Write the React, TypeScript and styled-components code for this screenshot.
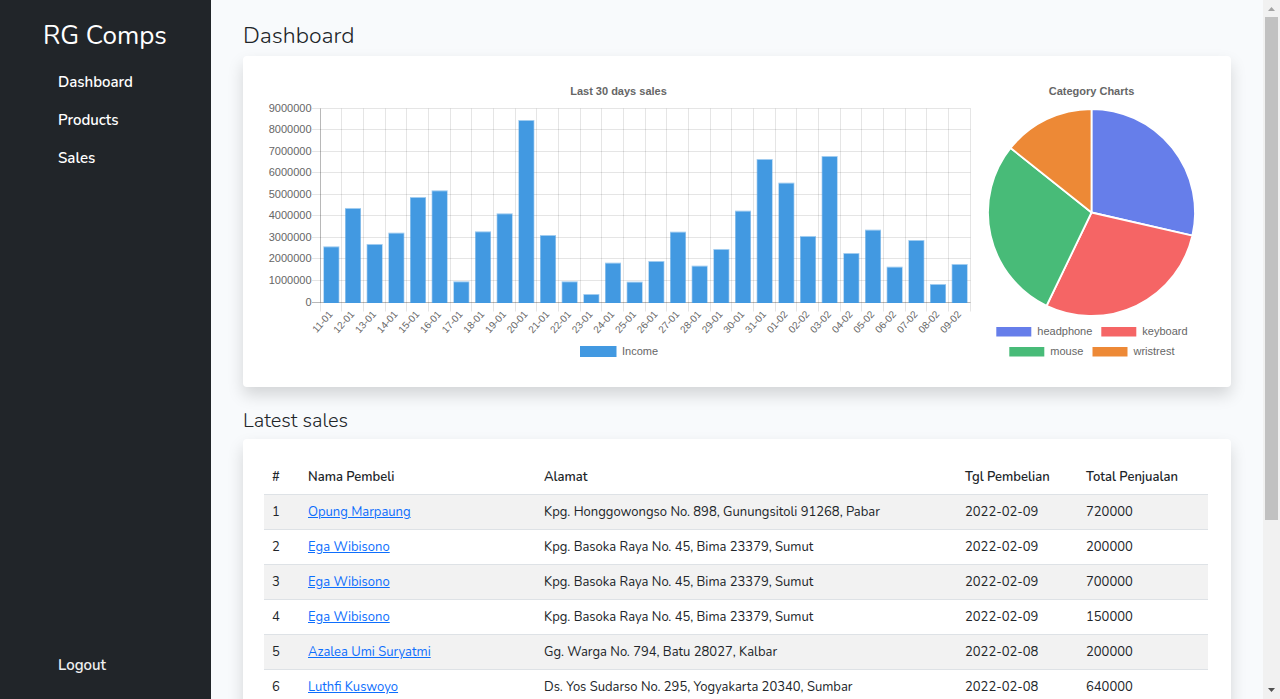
import React from "react";
import styled, { createGlobalStyle } from "styled-components";

const GlobalStyle = createGlobalStyle`
  *, *::before, *::after { box-sizing: border-box; }
  body {
    margin: 0;
    font-family: Nunito, Lato, sans-serif;
    font-size: 13px;
    font-weight: 400;
    color: #212529;
    background: #f8fafc;
  }
`;

const Shell = styled.div`
  display: grid;
  grid-template-columns: 211px minmax(0, 1fr) 17px;
  height: 100vh;
`;

const Sidebar = styled.nav`
  display: flex;
  flex-direction: column;
  padding: 17px 28px 16px;
  background: #212529;
`;

const Brand = styled.a`
  padding: 0 15px;
  font-size: 26px;
  font-weight: 400;
  line-height: 37px;
  white-space: nowrap;
  color: #fff;
  text-decoration: none;
`;

const NavList = styled.ul`
  display: flex;
  flex-direction: column;
  flex: 1;
  margin: 8px 0 0;
  padding: 0;
  list-style: none;
`;

const NavItem = styled.li<{ $last?: boolean }>`
  margin-top: ${(p) => (p.$last ? "auto" : "0")};
`;

const navEntry = `
  display: block;
  padding: 8px 0 6px 30px;
  border: 0;
  background: none;
  font-family: inherit;
  font-size: 15px;
  font-weight: 600;
  line-height: 24px;
  color: #fff;
  text-decoration: none;
`;

const NavLink = styled.a`${navEntry}`;

const LogoutButton = styled.button`
  ${navEntry}
  color: #f0f0f0;
  cursor: pointer;
`;

const Main = styled.main`
  padding: 21px 32px 32px;
  overflow-y: auto;
  scrollbar-width: none;
`;

const PageTitle = styled.h1`
  margin: 0 0 5px;
  font-size: 23px;
  font-weight: 300;
  line-height: 30px;
`;

const SectionTitle = styled.h2`
  margin: 21px 0 5px;
  font-size: 20px;
  font-weight: 300;
  line-height: 26px;
`;

const Card = styled.section`
  padding: 21px 23px 21px 21px;
  border-radius: 4px;
  background: #fff;
  box-shadow: 0 8px 16px rgba(0, 0, 0, 0.15);
`;

const Charts = styled.div`
  display: flex;
  align-items: flex-start;
  gap: 7px;
`;

const ChartSvg = styled.svg<{ $grow: number }>`
  display: block;
  flex: ${(p) => p.$grow} 1 0;
  min-width: 0;
  font-family: "Liberation Sans", Arial, sans-serif;
  font-size: 11px;
  font-weight: 400;
  fill: #666;
`;

const ChartTitle = styled.text`
  font-weight: 700;
  text-anchor: middle;
`;

const DayLabel = styled.text`
  font-size: 10px;
  text-anchor: end;
`;

const Table = styled.table`
  width: 100%;
  table-layout: fixed;
  border-collapse: collapse;
`;

const Col = styled.col<{ $width?: string }>`
  width: ${(p) => p.$width ?? "auto"};
`;

const HeadCell = styled.th`
  padding: 8px;
  border-bottom: 1px solid #dee2e6;
  font-weight: 600;
  line-height: 18px;
  text-align: left;
`;

const Row = styled.tr`
  &:nth-child(odd) { background: #f2f2f2; }
`;

const Cell = styled.td`
  padding: 8px;
  border-bottom: 1px solid #dee2e6;
  line-height: 18px;
`;

const BuyerLink = styled.a`
  color: #0d6efd;
`;

const Rail = styled.div`
  display: grid;
  grid-template-rows: 17px minmax(0, 1fr) 17px;
  background: #f1f1f1;
`;

const RailTrack = styled.div`
  padding: 0 2px;
`;

const RailThumb = styled.div`
  height: 75.6%;
  background: #c1c1c1;
`;

const INCOME: [string, number][] = [
  ["11-01", 2582000], ["12-01", 4361000], ["13-01", 2691000], ["14-01", 3216000],
  ["15-01", 4871000], ["16-01", 5180000], ["17-01", 959000], ["18-01", 3278000],
  ["19-01", 4113000], ["20-01", 8443000], ["21-01", 3108000], ["22-01", 959000],
  ["23-01", 371000], ["24-01", 1825000], ["25-01", 943000], ["26-01", 1902000],
  ["27-01", 3263000], ["28-01", 1686000], ["29-01", 2459000], ["30-01", 4237000],
  ["31-01", 6634000], ["01-02", 5536000], ["02-02", 3062000], ["03-02", 6773000],
  ["04-02", 2273000], ["05-02", 3356000], ["06-02", 1639000], ["07-02", 2876000],
  ["08-02", 835000], ["09-02", 1763000],
];

const PLOT = { left: 56.5, right: 706.5, top: 31.5, bottom: 225.5 };
const MAX_INCOME = 9000000;
const STEP = (PLOT.right - PLOT.left) / INCOME.length;
const incomeY = (value: number) =>
  PLOT.bottom - ((PLOT.bottom - PLOT.top) * value) / MAX_INCOME;

// Puts a hairline on the middle of a pixel so that it stays crisp.
const snap = (n: number) => Math.floor(n - 0.49) + 0.5;

function SalesChart() {
  const ticks = Array.from({ length: 10 }, (_, i) => i * 1000000);
  return (
    <ChartSvg $grow={710} viewBox="0 0 710 289" role="img" aria-label="Last 30 days sales">
      <ChartTitle x="354.5" y="18">Last 30 days sales</ChartTitle>
      {ticks.map((t) => {
        const y = snap(incomeY(t));
        return (
          <g key={t}>
            <line x1="48" x2={PLOT.right} y1={y} y2={y} stroke="#000" strokeOpacity={t ? 0.1 : 0.28} />
            <text x="47.5" y={y + 3} textAnchor="end">{t}</text>
          </g>
        );
      })}
      {[...INCOME, null].map((_, i) => {
        const x = snap(PLOT.left + i * STEP);
        return (
          <g key={i} stroke="#000">
            <line x1={x} x2={x} y1={PLOT.top} y2={PLOT.bottom} strokeOpacity={i ? 0.1 : 0.28} />
            <line x1={x} x2={x} y1={PLOT.bottom} y2="234.5" strokeOpacity="0.1" />
          </g>
        );
      })}
      {INCOME.map(([day, value], i) => {
        const center = PLOT.left + (i + 0.5) * STEP;
        const y = incomeY(value);
        return (
          <g key={day}>
            <rect x={center - 8} y={y - 0.5} width="16" height={PLOT.bottom - y + 1} fill="#4299e1" fillOpacity="0.5" />
            <rect x={center - 7.3} y={y + 0.5} width="14.6" height={PLOT.bottom - y} fill="#4299e1" />
            <DayLabel transform={`translate(${center - 1} 235) rotate(-48)`} y="4">
              {day}
            </DayLabel>
          </g>
        );
      })}
      <rect x="316" y="269" width="36.5" height="11" fill="#4299e1" />
      <text x="358" y="278">Income</text>
    </ChartSvg>
  );
}

const CATEGORIES = [
  { name: "headphone", share: 2, color: "#667eea", x: 15.3, y: 250 },
  { name: "keyboard", share: 2, color: "#f56565", x: 120.3, y: 250 },
  { name: "mouse", share: 2, color: "#48bb78", x: 28.3, y: 270 },
  { name: "wristrest", share: 1, color: "#ed8936", x: 111.5, y: 270 },
];

const PIE = { cx: 110.5, cy: 135.5, r: 103.5 };
const TOTAL = CATEGORIES.reduce((sum, c) => sum + c.share, 0);

function piePoint(share: number) {
  const angle = (share / TOTAL) * Math.PI * 2 - Math.PI / 2;
  return `${PIE.cx + PIE.r * Math.cos(angle)} ${PIE.cy + PIE.r * Math.sin(angle)}`;
}

function CategoryChart() {
  let start = 0;
  return (
    <ChartSvg $grow={227} viewBox="0 0 227 289" role="img" aria-label="Category Charts">
      <ChartTitle x="110.5" y="18">Category Charts</ChartTitle>
      {CATEGORIES.map((c) => {
        const from = piePoint(start);
        start += c.share;
        return (
          <path
            key={c.name}
            d={`M${PIE.cx} ${PIE.cy}L${from}A${PIE.r} ${PIE.r} 0 0 1 ${piePoint(start)}Z`}
            fill={c.color}
            stroke="#fff"
            strokeWidth="1.8"
            strokeLinejoin="bevel"
          />
        );
      })}
      {CATEGORIES.map((c) => (
        <g key={c.name}>
          <rect x={c.x} y={c.y} width="35" height="9.5" fill={c.color} />
          <text x={c.x + 41} y={c.y + 8}>{c.name}</text>
        </g>
      ))}
    </ChartSvg>
  );
}

const SALES = [
  ["Opung Marpaung", "Kpg. Honggowongso No. 898, Gunungsitoli 91268, Pabar", "2022-02-09", "720000"],
  ["Ega Wibisono", "Kpg. Basoka Raya No. 45, Bima 23379, Sumut", "2022-02-09", "200000"],
  ["Ega Wibisono", "Kpg. Basoka Raya No. 45, Bima 23379, Sumut", "2022-02-09", "700000"],
  ["Ega Wibisono", "Kpg. Basoka Raya No. 45, Bima 23379, Sumut", "2022-02-09", "150000"],
  ["Azalea Umi Suryatmi", "Gg. Warga No. 794, Batu 28027, Kalbar", "2022-02-08", "200000"],
  ["Luthfi Kuswoyo", "Ds. Yos Sudarso No. 295, Yogyakarta 20340, Sumbar", "2022-02-08", "640000"],
];

function SalesTable() {
  return (
    <Table>
      <colgroup>
        <Col $width="36px" />
        <Col $width="25%" />
        <Col />
        <Col $width="121px" />
        <Col $width="130px" />
      </colgroup>
      <thead>
        <tr>
          {["#", "Nama Pembeli", "Alamat", "Tgl Pembelian", "Total Penjualan"].map((h) => (
            <HeadCell key={h} scope="col">{h}</HeadCell>
          ))}
        </tr>
      </thead>
      <tbody>
        {SALES.map(([buyer, address, date, total], i) => (
          <Row key={i}>
            <Cell>{i + 1}</Cell>
            <Cell><BuyerLink href="#">{buyer}</BuyerLink></Cell>
            <Cell>{address}</Cell>
            <Cell>{date}</Cell>
            <Cell>{total}</Cell>
          </Row>
        ))}
      </tbody>
    </Table>
  );
}

function ScrollRail() {
  return (
    <Rail aria-hidden="true">
      <svg width="17" height="17" viewBox="0 0 17 17"><path d="M5 11L8.5 7L12 11Z" fill="#a3a3a3" /></svg>
      <RailTrack><RailThumb /></RailTrack>
      <svg width="17" height="17" viewBox="0 0 17 17"><path d="M5 6L12 6L8.5 10Z" fill="#505050" /></svg>
    </Rail>
  );
}

export default function App() {
  return (
    <>
      <GlobalStyle />
      <Shell>
        <Sidebar>
          <Brand href="#">RG Comps</Brand>
          <NavList>
            {["Dashboard", "Products", "Sales"].map((label) => (
              <NavItem key={label}><NavLink href="#">{label}</NavLink></NavItem>
            ))}
            <NavItem $last><LogoutButton type="button">Logout</LogoutButton></NavItem>
          </NavList>
        </Sidebar>
        <Main>
          <PageTitle>Dashboard</PageTitle>
          <Card>
            <Charts>
              <SalesChart />
              <CategoryChart />
            </Charts>
          </Card>
          <SectionTitle>Latest sales</SectionTitle>
          <Card>
            <SalesTable />
          </Card>
        </Main>
        <ScrollRail />
      </Shell>
    </>
  );
}
